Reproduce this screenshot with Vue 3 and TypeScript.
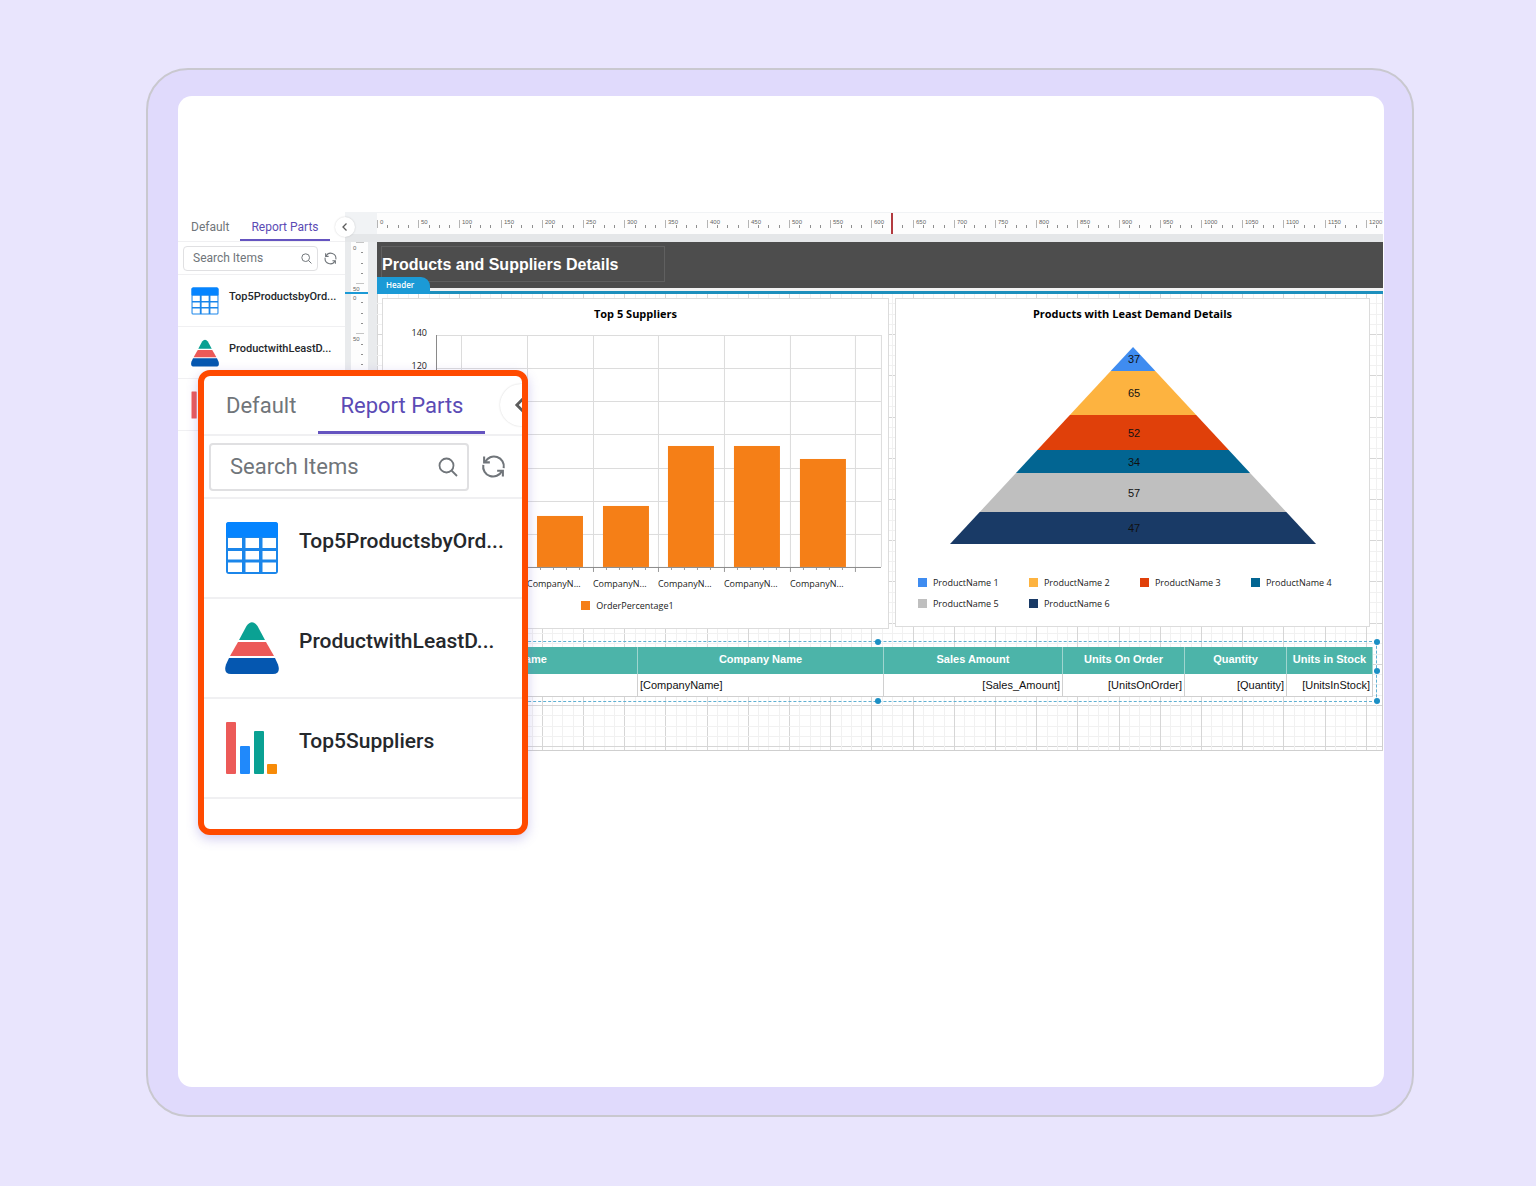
<script setup lang="ts">
import { ref } from 'vue'

type IconName = 'table' | 'pyramid' | 'bars'

interface ReportPart {
  name: string
  icon: IconName
}

const parts: ReportPart[] = [
  { name: 'Top5ProductsbyOrd...', icon: 'table' },
  { name: 'ProductwithLeastD...', icon: 'pyramid' },
  { name: 'Top5Suppliers', icon: 'bars' },
]

const panels = ['docked', 'magnified']
const query = ref('')

// One ruler division (50 units) in pixels; the report is 1200 units wide.
const division = 206 / 5
const divisions = Array.from({ length: 25 }, (_, i) => i)
const minors = [1, 2, 3]
const gridLines = Array.from({ length: 240 }, (_, i) => i)
const at = (n: number) => Math.round(n * division)
const sub = (n: number) => Math.round((n * division) / 4)

// Vertical ruler: the header band and the body each restart at zero.
const verticalSections = [
  { top: 0, labels: [0, 50] },
  { top: 50, labels: [0, 50, 100, 150, 200] },
]

const bars = [
  { x: 88, top: 200 },
  { x: 154, top: 194 },
  { x: 220, top: 184 },
  { x: 285, top: 124 },
  { x: 351, top: 124 },
  { x: 417, top: 137 },
]
const categoryLines = [78, 144, 210, 275, 341, 407, 472, 498]
const valueLines = [
  { y: 13, label: '140' },
  { y: 46, label: '120' },
  { y: 79, label: '100' },
  { y: 112, label: '80' },
  { y: 146, label: '60' },
  { y: 179, label: '40' },
  { y: 212, label: '20' },
]

const apex = { x: 237, y: 25 }
const slope = 183 / 197
const tiers = [
  { value: 37, top: 25, bottom: 49, label: 41, color: '#3f8cf0' },
  { value: 65, top: 49, bottom: 93, label: 75, color: '#fdb340' },
  { value: 52, top: 93, bottom: 128, label: 115, color: '#e0400a' },
  { value: 34, top: 128, bottom: 151, label: 144, color: '#026592' },
  { value: 57, top: 151, bottom: 190, label: 175, color: '#bfbfbf' },
  { value: 47, top: 190, bottom: 222, label: 210, color: '#193a66' },
]
const tierPoints = (top: number, bottom: number) => {
  const a = (top - apex.y) * slope
  const b = (bottom - apex.y) * slope
  return `${apex.x - a},${top} ${apex.x + a},${top} ${apex.x + b},${bottom} ${apex.x - b},${bottom}`
}

const columns = [
  { title: 'Product Name', field: '[ProductName]', width: 256, numeric: false },
  { title: 'Company Name', field: '[CompanyName]', width: 246, numeric: false },
  { title: 'Sales Amount', field: '[Sales_Amount]', width: 179, numeric: true },
  { title: 'Units On Order', field: '[UnitsOnOrder]', width: 122, numeric: true },
  { title: 'Quantity', field: '[Quantity]', width: 102, numeric: true },
  { title: 'Units in Stock', field: '[UnitsInStock]', width: 86, numeric: true },
]
const handles = ['top', 'top-right', 'right', 'bottom-right', 'bottom']
</script>

<template>
  <main class="page">
    <div class="frame">
      <div class="screen">
        <div class="designer">
          <aside v-for="panel in panels" :key="panel" class="panel" :class="panel">
            <div class="tabs" role="tablist">
              <button class="tab" role="tab" aria-selected="false">Default</button>
              <button class="tab active" role="tab" aria-selected="true">Report Parts</button>
              <button class="collapse" aria-label="Collapse panel">
                <svg viewBox="0 0 20 20"><path d="M11.500 6.500 8 10l3.500 3.500" fill="none" stroke="#5c5c5c" stroke-width="1.300" /></svg>
              </button>
            </div>
            <div class="search-row">
              <label class="search">
                <input v-model="query" type="text" placeholder="Search Items" aria-label="Search items" />
                <svg viewBox="0 0 20 20" fill="none" stroke="#70757a" stroke-width="1.800">
                  <circle cx="8.500" cy="8.500" r="7" />
                  <path d="M13.500 13.500 19 19" />
                </svg>
              </label>
              <button class="refresh" aria-label="Refresh">
                <svg viewBox="0 0 24 24" fill="none" stroke="#70757a" stroke-width="2">
                  <path d="M4 7.500A9.500 9.500 0 0 1 21.800 13.500M20 16.500A9.500 9.500 0 0 1 2.200 10.500" />
                  <path d="M3 2.500v5.500h5.500M21 21.500V16h-5.500" />
                </svg>
              </button>
            </div>
            <ul class="parts">
              <li v-for="part in parts" :key="part.name" class="part">
                <svg v-if="part.icon === 'table'" class="part-icon" viewBox="0 0 54 52">
                  <rect x="1" width="52" height="52" rx="3" fill="#1b86ea" />
                  <path d="M1 15V3a3 3 0 0 1 3-3h46a3 3 0 0 1 3 3v12z" fill="#0584ff" />
                  <path
                    d="M3 16h14v10H3zM20.500 16h13.500v10H20.500zM37.500 16h13.500v10H37.500zM3 29h14v8.500H3zM20.500 29h13.500v8.500H20.500zM37.500 29h13.500v8.500H37.500zM3 40.500h14V50H3zM20.500 40.500h13.500V50H20.500zM37.500 40.500h13.500V50H37.500z"
                    fill="#fff"
                  />
                </svg>
                <svg v-else-if="part.icon === 'pyramid'" class="part-icon" viewBox="0 0 54 52">
                  <path d="M14 18 21.500 4Q27-3.500 32.500 4L40 18z" fill="#0aa193" />
                  <path d="M13 20h28l8 14H5z" fill="#ec5a58" />
                  <path d="M4 36h46l3 6.500Q56 52 48 52H6Q-2 52 1 42.500z" fill="#0557b0" />
                </svg>
                <svg v-else class="part-icon" viewBox="0 0 54 52">
                  <rect x="1" width="10" height="52" rx="1" fill="#ec5a58" />
                  <rect x="15" y="24" width="10" height="28" rx="1" fill="#2089fb" />
                  <rect x="29" y="9" width="10" height="43" rx="1" fill="#0aa193" />
                  <rect x="42" y="42" width="10" height="10" rx="1" fill="#f78b08" />
                </svg>
                <span class="part-name">{{ part.name }}</span>
              </li>
            </ul>
          </aside>

          <section class="canvas">
            <div class="ruler-row">
              <svg class="ruler-x">
                <g v-for="i in divisions" :key="i">
                  <rect :x="at(i)" y="7" width="1" height="8" fill="#b5b5b5" />
                  <rect v-for="m in minors" :key="m" :x="sub(i * 4 + m)" y="12" width="1" height="3" fill="#8f8f8f" />
                  <text :x="at(i) + 3" y="11">{{ i * 50 }}</text>
                </g>
                <rect x="514" y="0" width="2" height="22" fill="#b23a3f" />
              </svg>
            </div>
            <div class="workspace">
              <div class="ruler-column">
                <svg class="ruler-y">
                  <g v-for="section in verticalSections" :key="section.top">
                    <g v-for="(label, i) in section.labels" :key="label">
                      <rect x="5" :y="section.top + at(i)" width="8" height="1" fill="#c5c5c5" />
                      <rect
                        v-for="m in section.top || !i ? minors : []"
                        :key="m"
                        x="10"
                        :y="section.top + sub(i * 4 + m)"
                        width="2"
                        height="1"
                        fill="#8f8f8f"
                      />
                      <text x="2" :y="section.top + at(i) + 8">{{ label }}</text>
                    </g>
                  </g>
                </svg>
                <div class="section-marker"></div>
              </div>

              <div class="report">
                <header class="report-header">
                  <h1>Products and Suppliers Details</h1>
                  <span class="band-tag">Header</span>
                </header>
                <div class="report-body">
                  <svg class="grid-lines" aria-hidden="true">
                    <g v-for="n in gridLines" :key="n">
                      <rect :x="sub(n)" y="0" width="1" height="100%" :fill="n % 4 ? '#f1f1f1' : '#d6d6d6'" />
                      <rect x="0" :y="sub(n) - 1" width="100%" height="1" :fill="n % 4 ? '#f1f1f1' : '#d6d6d6'" />
                    </g>
                  </svg>

                  <div class="charts">
                    <article class="chart suppliers">
                      <h2>Top 5 Suppliers</h2>
                      <svg viewBox="0 0 505 273">
                        <g v-for="line in valueLines" :key="line.label">
                          <rect x="53" :y="line.y" width="445" height="1" fill="#dcdcdc" />
                          <text x="44" :y="line.y + 1" text-anchor="end">{{ line.label }}</text>
                        </g>
                        <rect v-for="x in categoryLines" :key="x" :x="x" y="13" width="1" height="232" fill="#dcdcdc" />
                        <rect x="53" y="13" width="1" height="232" fill="#8a8a8a" />
                        <g v-for="(bar, i) in bars" :key="bar.x">
                          <rect :x="bar.x" :y="bar.top" width="46" :height="245 - bar.top" fill="#f57f17" />
                          <rect v-for="m in 4" :key="m" :x="categoryLines[i] + m * 13" y="246" width="1" height="2" fill="#9a9a9a" />
                          <rect :x="categoryLines[i]" y="245" width="1" height="5" fill="#9a9a9a" />
                          <text :x="categoryLines[i]" y="265">CompanyN...</text>
                        </g>
                        <rect x="472" y="245" width="1" height="5" fill="#9a9a9a" />
                        <rect x="53" y="245" width="445" height="1" fill="#8a8a8a" />
                      </svg>
                      <div class="legend">
                        <span class="key"><i class="swatch"></i>OrderPercentage1</span>
                      </div>
                    </article>

                    <article class="chart demand">
                      <h2>Products with Least Demand Details</h2>
                      <svg viewBox="0 0 473 250">
                        <g v-for="tier in tiers" :key="tier.value">
                          <polygon :points="tierPoints(tier.top, tier.bottom)" :fill="tier.color" />
                          <text x="238" :y="tier.label" text-anchor="middle">{{ tier.value }}</text>
                        </g>
                      </svg>
                      <div class="legend">
                        <span v-for="(tier, i) in tiers" :key="tier.value" class="key">
                          <i class="swatch" :style="{ background: tier.color }"></i>ProductName {{ i + 1 }}
                        </span>
                      </div>
                    </article>
                  </div>

                  <div class="data-region">
                    <table>
                      <colgroup>
                        <col v-for="c in columns" :key="c.title" :style="{ width: c.width + 'px' }" />
                      </colgroup>
                      <thead>
                        <tr>
                          <th v-for="c in columns" :key="c.title" scope="col">{{ c.title }}</th>
                        </tr>
                      </thead>
                      <tbody>
                        <tr>
                          <td v-for="c in columns" :key="c.title" :class="{ numeric: c.numeric }">{{ c.field }}</td>
                        </tr>
                      </tbody>
                    </table>
                    <div class="selection">
                      <i v-for="h in handles" :key="h" class="handle" :class="h"></i>
                    </div>
                  </div>
                </div>
              </div>
            </div>
          </section>
        </div>
      </div>
    </div>
  </main>
</template>

<style>
body {
  margin: 0;
  background: #e9e5fd;
}
</style>

<style scoped>
* {
  box-sizing: border-box;
}

button {
  margin: 0;
  padding: 0;
  border: 0;
  background: none;
  font: inherit;
  color: inherit;
}

svg {
  display: block;
}

.page {
  display: flex;
  min-height: 100vh;
  padding: 68px 122px 69px 146px;
  font-family: Roboto, 'Liberation Sans', sans-serif;
}

.frame {
  display: flex;
  flex: 1;
  min-width: 0;
  padding: 26px 28px 28px 30px;
  border: 2px solid #c9c8cf;
  border-radius: 42px;
  background: #e0dafc;
}

.screen {
  flex: 1;
  min-width: 0;
  padding-top: 116px;
  border-radius: 14px;
  background: #fff;
}

.designer {
  position: relative;
  display: flex;
}

/* Report parts panel, docked and magnified */
.panel {
  color: #70757a;
  background: #fff;
}

.docked {
  --text: 12px;
  --name: 11px;
  --tabs-h: 30px;
  --tab-pad: 11px;
  --search-h: 25px;
  --search-row: 33px;
  --part-h: 52px;
  --icon: 28px;
  --line: 1px;
  --underline: 2px;
  --glyph: 11px;
  --refresh: 13px;
  --collapse: 20px;
  position: relative;
  z-index: 1;
  flex: none;
  width: 167px;
}

.magnified {
  --text: 22px;
  --name: 21px;
  --tabs-h: 60px;
  --tab-pad: 22px;
  --search-h: 48px;
  --search-row: 63px;
  --part-h: 100px;
  --icon: 54px;
  --line: 2px;
  --underline: 3px;
  --glyph: 20px;
  --refresh: 25px;
  --collapse: 42px;
  position: absolute;
  z-index: 2;
  top: 158px;
  left: 20px;
  width: 330px;
  height: 465px;
  overflow: hidden;
  border: 6px solid #ff4a00;
  border-radius: 12px;
  box-shadow: 0 4px 12px #6a5acd4d;
}

.tabs {
  position: relative;
  display: flex;
  height: var(--tabs-h);
  border-bottom: var(--line) solid #f0f0f2;
  font-size: var(--text);
}

.tab {
  padding: 0 var(--tab-pad);
  white-space: nowrap;
}

.docked .tab:first-child {
  padding-left: 13px;
}

.tab.active {
  box-shadow: inset 0 calc(0px - var(--underline)) #6554c0;
  color: #5b4bb5;
}

.collapse {
  position: absolute;
  top: 5px;
  right: -10px;
  width: var(--collapse);
  height: var(--collapse);
  border-radius: 50%;
  background: #fff;
  box-shadow: 0 0 2px #0000002e;
}

.magnified .collapse {
  top: 8px;
  right: -20px;
}

.search-row {
  display: flex;
  align-items: center;
  gap: 6px;
  height: var(--search-row);
  padding: 0 8px 0 5px;
  border-bottom: var(--line) solid #f0f0f2;
}

.magnified .search-row {
  gap: 12px;
  padding-right: 16px;
}

.search {
  display: flex;
  flex: 1;
  align-items: center;
  min-width: 0;
  height: var(--search-h);
  padding: 0 5px 0 9px;
  border: var(--line) solid #e0e0e2;
  border-radius: 4px;
}

.magnified .search {
  padding: 0 9px 0 19px;
}

.search input {
  flex: 1;
  width: 0;
  min-width: 0;
  padding: 0;
  border: 0;
  outline: 0;
  background: none;
  color: #70757a;
  font: var(--text) Roboto, 'Liberation Sans', sans-serif;
}

.search input::placeholder {
  color: #70757a;
  opacity: 1;
}

.search svg {
  width: var(--glyph);
  height: var(--glyph);
}

.refresh svg {
  width: var(--refresh);
  height: var(--refresh);
}

.parts {
  margin: 0;
  padding: 0;
  list-style: none;
}

.part {
  display: flex;
  align-items: center;
  gap: 10px;
  height: var(--part-h);
  padding-left: 13px;
  border-bottom: var(--line) solid #f0f0f2;
}

.magnified .part {
  gap: 20px;
  padding-left: 21px;
}

.part-icon {
  flex: none;
  width: var(--icon);
  height: var(--icon);
}

.part-name {
  padding-bottom: 8px;
  color: #25282c;
  font-size: var(--name);
  font-weight: 500;
  white-space: nowrap;
}

.magnified .part-name {
  padding-bottom: 14px;
}

/* Design surface */
.canvas {
  flex: 1;
  min-width: 0;
  margin-right: 1px;
  background: #e9ebed;
}

.ruler-row {
  height: 30px;
  padding: 1px 0 8px 32px;
  background: linear-gradient(#f1f3f5 22px, #e5e7e9 22px);
}

.ruler-x {
  width: 100%;
  height: 21px;
  background: #fdfdfd;
}

.ruler-x text,
.ruler-y text {
  fill: #666;
  font: 6px 'Liberation Sans', sans-serif;
}

.workspace {
  display: flex;
}

.ruler-column {
  position: relative;
  display: flex;
  flex: none;
  width: 32px;
  padding-left: 6px;
}

.ruler-y {
  width: 17px;
  height: auto;
  background: #fdfdfd;
}

.section-marker {
  position: absolute;
  top: 50px;
  left: 0;
  width: 23px;
  height: 2px;
  background: #1b9ad6;
}

.report {
  flex: 1;
  min-width: 0;
}

.report-header {
  position: relative;
  height: 52px;
  padding: 4px;
  border-bottom: 3px solid #1d8fbd;
  background: linear-gradient(#4d4d4d 46px, #f2f2f2 46px);
}

h1 {
  width: 284px;
  height: 36px;
  margin: 0;
  border: 1px solid #606060;
  color: #fff;
  font: bold 16px/35px 'Liberation Sans', sans-serif;
  white-space: nowrap;
}

.band-tag {
  position: absolute;
  top: 35px;
  left: 0;
  width: 53px;
  height: 17px;
  padding-left: 9px;
  border-radius: 0 9px 0 0;
  background: #1b9ad6;
  color: #fff;
  font: 600 8px/15px 'Open Sans', sans-serif;
}

.report-body {
  position: relative;
  padding: 4px 10px 53px 5px;
  border-right: 1px solid #cfcfcf;
  border-bottom: 1px solid #cfcfcf;
  background: #fff;
}

.grid-lines {
  position: absolute;
  top: 0;
  left: 0;
  width: 100%;
  height: 100%;
}

.charts {
  position: relative;
  display: flex;
  align-items: flex-start;
  gap: 6px;
  padding-right: 2px;
}

.chart {
  min-width: 0;
  padding: 7px 0 12px;
  border: 1px solid #dcdcdc;
  background: #fff;
  color: #222;
  font: 9px 'Open Sans', sans-serif;
}

.suppliers {
  flex: 507 1 0;
}

.demand {
  flex: 475 1 0;
}

.chart svg {
  width: 100%;
}

.suppliers text {
  fill: #222;
}

.demand text {
  fill: #111;
  font: 11px 'Liberation Sans', sans-serif;
}

h2 {
  margin: 0;
  color: #000;
  font: bold 11px/16px 'Open Sans', sans-serif;
  text-align: center;
}

.legend {
  display: flex;
  flex-wrap: wrap;
}

.suppliers .legend {
  justify-content: center;
  padding-right: 16px;
}

.demand .legend {
  padding-left: 22px;
}

.key {
  display: flex;
  align-items: center;
  gap: 6px;
  line-height: 21px;
}

.demand .key {
  width: 111px;
}

.swatch {
  width: 9px;
  height: 9px;
  background: #f57f17;
}

.data-region {
  position: relative;
  margin-top: 18px;
}

table {
  width: 100%;
  table-layout: fixed;
  border-spacing: 0;
  background: #fff;
  color: #111;
  font: 11px 'Liberation Sans', sans-serif;
}

th {
  height: 27px;
  padding: 0 0 2px;
  border-right: 1px solid #9fd5cf;
  background: #4cb4a9;
  color: #fff;
  white-space: nowrap;
}

td {
  height: 23px;
  padding: 0 2px;
  border-right: 1px solid #d0d0d0;
  border-bottom: 1px solid #d0d0d0;
}

.numeric {
  text-align: right;
}

.selection {
  position: absolute;
  top: -6px;
  right: -5px;
  bottom: -5px;
  left: -4px;
  border: 1px dashed #5fb0d2;
}

.handle {
  position: absolute;
  width: 6px;
  height: 6px;
  border-radius: 50%;
  background: #1b8fc4;
}

.top,
.top-right {
  top: -3px;
}

.top,
.bottom {
  left: calc(50% - 3px);
}

.top-right,
.right,
.bottom-right {
  right: -4px;
}

.right {
  top: calc(50% - 3px);
}

.bottom,
.bottom-right {
  bottom: -3px;
}
</style>
